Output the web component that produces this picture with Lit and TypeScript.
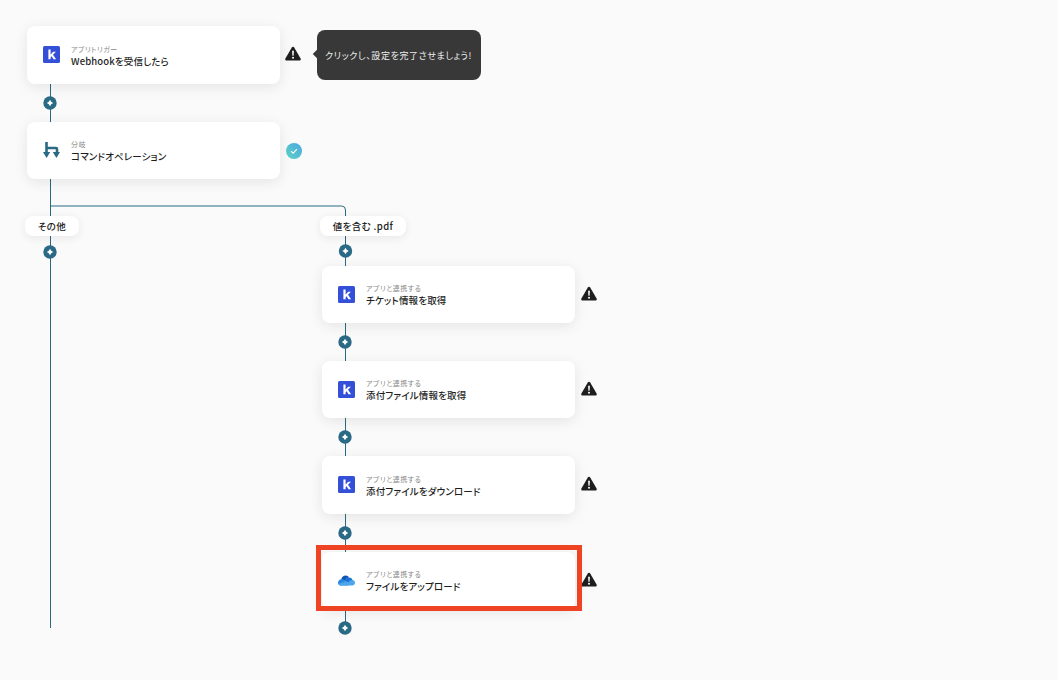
import { LitElement, html, css, svg } from "lit";
import { customElement } from "lit/decorators.js";

const kIcon = html`<svg width="17" height="17" viewBox="0 0 17 17"><rect width="17" height="17" rx="1.5" fill="#3450d8"/><path d="M5.400 3.600h2.200v5l2.600-2.800h2.700L10 8.800l3.100 4.400h-2.600L8.600 10.300l-1 1v1.900H5.400z" fill="#fff"/></svg>`;
const branchIcon = html`<svg width="17" height="17" viewBox="0 0 17 17"><path d="M3.500 0V11M3.500 6H13a1 1 0 0 1 1 1V11" fill="none" stroke="#2a6a85" stroke-width="2.600"/><path d="M0 10h7.200L3.600 16zM9.800 10H17l-3.600 6z" fill="#2a6a85"/></svg>`;
const cloudIcon = html`<svg width="20" height="13" viewBox="0 0 20 13"><path d="M7.500 9.500 12 5.200 16.500 7.500 13 11H6z" fill="#1e6fc9"/><path d="M3.700 5.500C4.300 2.300 6.800.6 9 .6c1.900 0 3.200.9 4.200 2.400C11 3.200 9 4.900 8.500 7z" fill="#0d57b3"/><path d="M8.200 6.800C9 4.300 10.800 3 13 3c2.200 0 3.700 1.300 4.200 3.400l-5 3z" fill="#1b73d6"/><path d="M3.700 5.100c2-.2 3.700.5 5 1.800l3.800 5.600H3.500C1.500 12.500 0 11 0 9.100 0 7.100 1.600 5.300 3.700 5.100z" fill="#2b88dd"/><path d="M17 6c1.700.1 3 1.500 3 3.200 0 1.900-1.400 3.300-3.300 3.300H4c-1.500 0-2.700-.7-3.400-1.800L8 8c1.700-.6 3-.3 4.200.7 1.200-1.700 2.900-2.700 4.800-2.700z" fill="#4ba6ec"/></svg>`;
const warnIcon = svg`<path d="M8 .8c.5 0 .9.300 1.200.7l6.400 11c.5 1-.1 2-1.200 2H1.600c-1.100 0-1.700-1-1.200-2l6.400-11C7.100 1.100 7.500.8 8 .8z" fill="#1e1e1e"/><path d="M7.100 4.800h1.800l-.3 5H7.400z" fill="#fff"/><circle cx="8" cy="11.800" r="1" fill="#fff"/>`;

const cards = [
  { x: 27, y: 26, h: 58, icon: kIcon, label: "アプリトリガー", title: "Webhookを受信したら", mark: "warn", mx: 258 },
  { x: 27, y: 122, h: 57, icon: branchIcon, label: "分岐", title: "コマンドオペレーション", mark: "ok", mx: 259 },
  { x: 322, y: 266, h: 57, icon: kIcon, label: "アプリと連携する", title: "チケット情報を取得", mark: "warn", mx: 258.5 },
  { x: 322, y: 361, h: 57, icon: kIcon, label: "アプリと連携する", title: "添付ファイル情報を取得", mark: "warn", mx: 258.5 },
  { x: 322, y: 456, h: 58, icon: kIcon, label: "アプリと連携する", title: "添付ファイルをダウンロード", mark: "warn", mx: 258.5 },
  { x: 322, y: 552, h: 57, icon: cloudIcon, label: "アプリと連携する", title: "ファイルをアップロード", mark: "warn", mx: 258.5 },
];
const dots = [[50, 103], [50, 252], [345.5, 251], [345, 342], [345, 437], [345, 533], [345, 628]];

@customElement("app-root")
export class AppRoot extends LitElement {
  static styles = css`
    :host { display: block; width: 1058px; height: 680px; }
    .canvas {
      position: relative; width: 1058px; height: 680px; overflow: hidden; background: #fafafa;
      font-family: "Noto Sans CJK JP", "Noto Sans", sans-serif; color: #222;
      font-feature-settings: "palt";
    }
    .wires { position: absolute; left: 0; top: 0; }
    .card {
      position: absolute; width: 253px; box-sizing: border-box; background: #fff; border-radius: 8px;
      box-shadow: 0 3px 14px rgba(0, 0, 0, 0.09); display: flex; align-items: center; gap: 11px; padding: 0 0 0 16px;
    }
    .icon { width: 17px; height: 17px; display: flex; align-items: center; justify-content: center; flex: none; margin-top: -1px; }
    .txt { display: flex; flex-direction: column; }
    .label { font-size: 7px; line-height: 11px; color: #8a8a8a; white-space: nowrap; letter-spacing: 0.480px; }
    .title { font-size: 9.500px; line-height: 12px; font-weight: 500; color: #1f1f1f; white-space: nowrap; letter-spacing: 0.150px; }
    .mark { position: absolute; width: 16px; height: 16px; }
    .pill {
      position: absolute; height: 20px; box-sizing: border-box; background: #fff; border-radius: 8px;
      box-shadow: 0 2px 10px rgba(0, 0, 0, 0.08); display: flex; align-items: center; justify-content: center;
      font-size: 9.500px; font-weight: 500; color: #222; white-space: nowrap; letter-spacing: 0.400px;
    }
    .tip {
      position: absolute; left: 317px; top: 30px; width: 164px; height: 50px; background: #383838; border-radius: 8px;
      color: #eee; font-size: 9px; display: flex; align-items: center; padding-left: 8px; box-sizing: border-box; white-space: nowrap; letter-spacing: 0.600px;
    }
    .tip::before {
      content: ""; position: absolute; left: -3px; top: 21px; width: 6px; height: 6px; background: #383838; transform: rotate(45deg);
    }
    .frame { position: absolute; left: 316px; top: 545px; width: 266px; height: 66px; box-sizing: border-box; border: 5px solid #ef4423; }
  `;

  render() {
    return html`<div class="canvas">
      <svg class="wires" width="1058" height="680" fill="none" stroke="#2a6a85" stroke-width="1">
        <path d="M50.500 84V628"/>
        <path d="M50.500 206H341.500a4 4 0 0 1 4 4V628"/>
        ${dots.map(([x, y]) => svg`
          <circle cx=${x} cy=${y} r="6.700" fill="#2a6a85" stroke="none"/>
          <path d="M${x} ${y - 3.200}L${x + 1.200} ${y - 1.200}L${x + 3.200} ${y}L${x + 1.200} ${y + 1.200}L${x} ${y + 3.200}L${x - 1.200} ${y + 1.200}L${x - 3.200} ${y}L${x - 1.200} ${y - 1.200}Z" fill="#fff" stroke="none"/>`)}
      </svg>
      ${cards.map((c) => html`
        <div class="card" style="left:${c.x}px;top:${c.y}px;height:${c.h}px">
          <div class="icon">${c.icon}</div>
          <div class="txt"><span class="label">${c.label}</span><span class="title">${c.title}</span></div>
        </div>
        ${c.mark === "warn"
          ? html`<svg class="mark" viewBox="0 0 16 16" style="left:${c.x + c.mx}px;top:${c.y + 20}px">${warnIcon}</svg>`
          : html`<svg class="mark" viewBox="0 0 16 16" style="left:${c.x + c.mx}px;top:${c.y + 21}px">
              <defs><linearGradient id="g" x1="0" y1="1" x2="1" y2="0"><stop offset="0" stop-color="#5fd3c4"/><stop offset="1" stop-color="#4aa8e0"/></linearGradient></defs>
              <circle cx="8" cy="8" r="8" fill="url(#g)"/><path d="M5 8.200l2.100 2L11 6.200" fill="none" stroke="#fff" stroke-width="1.100"/></svg>`}
      `)}
      <div class="pill" style="left:25px;top:216px;width:54px">その他</div>
      <div class="pill" style="left:320px;top:216px;width:86px">値を含む .pdf</div>
      <div class="tip">クリックし、設定を完了させましょう!</div>
      <div class="frame"></div>
    </div>`;
  }
}
